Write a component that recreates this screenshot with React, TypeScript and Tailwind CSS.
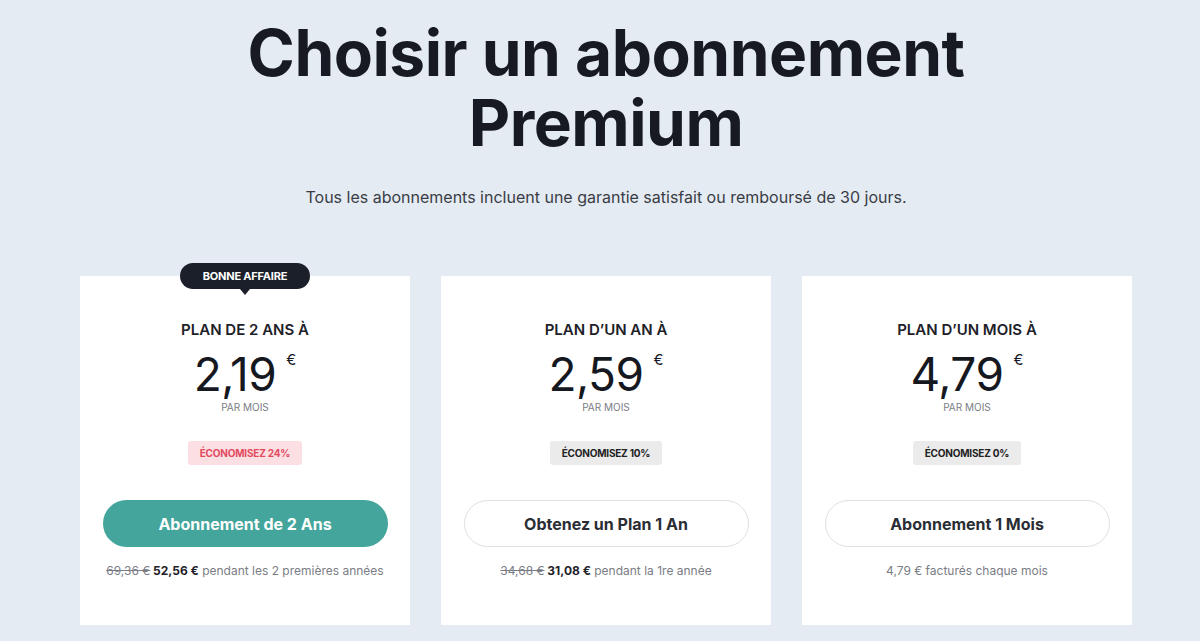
const plans = [
  {
    title: "PLAN DE 2 ANS À",
    price: "2,19",
    save: "ÉCONOMISEZ 24%",
    saveClass: "bg-[#fbdfe2] text-[#e34a5f]",
    cta: "Abonnement de 2 Ans",
    primary: true,
    old: "69,36 €",
    now: "52,56 €",
    rest: "pendant les 2 premières années",
    deal: true,
  },
  {
    title: "PLAN D’UN AN À",
    price: "2,59",
    save: "ÉCONOMISEZ 10%",
    saveClass: "bg-[#ebebeb] text-[#222]",
    cta: "Obtenez un Plan 1 An",
    primary: false,
    old: "34,68 €",
    now: "31,08 €",
    rest: "pendant la 1re année",
    deal: false,
  },
  {
    title: "PLAN D’UN MOIS À",
    price: "4,79",
    save: "ÉCONOMISEZ 0%",
    saveClass: "bg-[#ebebeb] text-[#222]",
    cta: "Abonnement 1 Mois",
    primary: false,
    old: "",
    now: "",
    rest: "4,79 € facturés chaque mois",
    deal: false,
  },
]

export default function App() {
  return (
    <div
      className="min-h-screen w-full bg-[#e4ebf3] text-[#1b1e26] overflow-hidden"
      style={{ fontFamily: "Inter, 'Noto Sans', sans-serif" }}
    >
      {/* Header */}
      <div className="flex flex-col items-center pt-[18px] pl-[12px]">
        <h1 className="text-[64px] font-bold leading-[70px] tracking-[-0.5px] text-center text-[#171a22]">
          Choisir un abonnement
          <br />
          Premium
        </h1>
        <p className="mt-[27px] text-[16px] text-[#3a3d45]">
          Tous les abonnements incluent une garantie satisfait ou remboursé de 30 jours.
        </p>
      </div>

      {/* Cards */}
      <div className="mt-[67px] flex justify-center gap-[31px] pl-[12px]">
        {plans.map((p) => (
          <div key={p.title} className="relative w-[330px] h-[349px] bg-white flex flex-col items-center pt-[44px]">
            {p.deal && (
              <div className="absolute -top-[13px] left-[100px] flex flex-col items-center">
                <div className="h-[26px] w-[130px] rounded-full bg-[#1b1f29] text-white text-[11px] font-bold flex items-center justify-center tracking-[-0.2px]">
                  BONNE AFFAIRE
                </div>
                <div className="w-0 h-0 border-l-[5px] border-r-[5px] border-t-[6px] border-l-transparent border-r-transparent border-t-[#1b1f29]" />
              </div>
            )}
            <div className="text-[15px] font-semibold leading-[20px] text-[#1e2128]">{p.title}</div>
            <div className="mt-[10px] flex items-start">
              <span className="text-[46px] font-normal leading-[48px] tracking-[-0.5px] text-[#15181f]">{p.price}</span>
              <span className="ml-[10px] mt-[2px] text-[15px] leading-[15px] text-[#15181f]">€</span>
            </div>
            <div className="mt-[2px] text-[10px] leading-[14px] text-[#7a7d85]">PAR MOIS</div>
            <div className={`mt-[27px] h-[24px] px-[12px] rounded-[3px] flex items-center text-[10px] font-bold tracking-[-0.2px] ${p.saveClass}`}>
              {p.save}
            </div>
            <button
              className={
                p.primary
                  ? "mt-[35px] w-[285px] h-[47px] rounded-full bg-[#43a59b] text-white text-[16px] font-bold"
                  : "mt-[35px] w-[285px] h-[47px] rounded-full bg-white border border-[#e0e0e0] text-[#2a2d34] text-[16px] font-bold"
              }
            >
              {p.cta}
            </button>
            <div className="mt-[16px] text-[12px] text-[#7a7d85] leading-[16px]">
              {p.old && <span className="line-through">{p.old}</span>}
              {p.now && <span className="font-bold text-[#1e2128]"> {p.now}</span>}
              {p.old ? " " + p.rest : p.rest}
            </div>
          </div>
        ))}
      </div>
    </div>
  )
}
